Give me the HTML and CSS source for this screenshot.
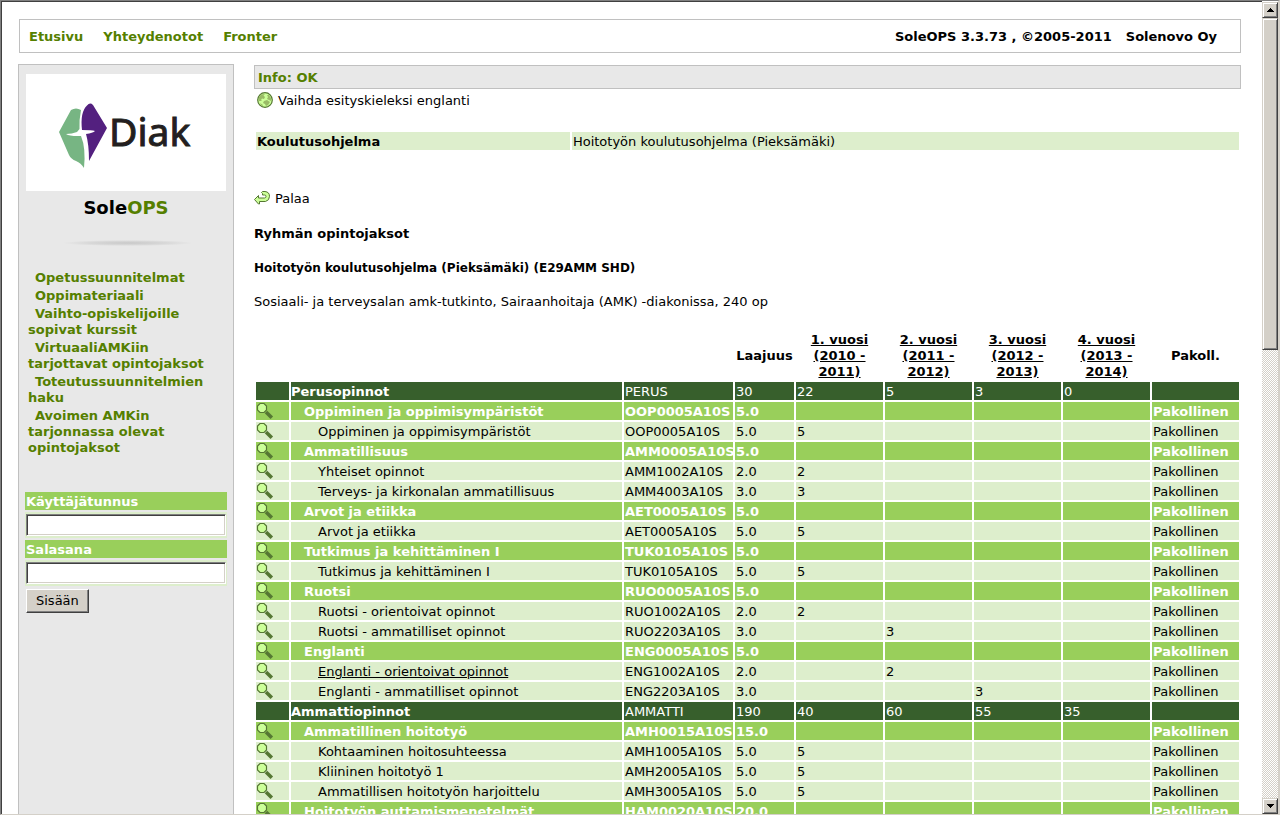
FILE: index.html
```html
<!DOCTYPE html>
<html lang="fi">
<head>
<meta charset="utf-8">
<title>SoleOPS</title>
<link rel="stylesheet" href="styles.css">
</head>
<body>
<svg class="defs" aria-hidden="true">
  <symbol id="lens" viewBox="0 0 18 18">
    <path d="M10 10L15.800 15.800" stroke="#557733" stroke-width="3.600" fill="none"/>
    <path d="M4 1.500H8L10.500 4V8L8 10.500H4L1.500 8V4Z" fill="#ccff99" stroke="#557733" stroke-width="1.200"/>
  </symbol>
</svg>
<div class="frame">
<div class="page">
  <header class="topbar">
    <nav class="topnav"><a href="#">Etusivu</a><a href="#">Yhteydenotot</a><a href="#">Fronter</a></nav>
    <div class="version"><span>SoleOPS 3.3.73 , ©2005-2011</span><span>Solenovo Oy</span></div>
  </header>
  <div class="columns">
    <aside class="sidebar">
      <svg class="logo" viewBox="0 0 200 117" role="img" aria-label="Diak">
        <path fill="#77b583" d="M45 36Q50 33 55 36Q53 46 53.500 55L51 58Q46 60 40 60Q44 62.500 55 62Q60 74 58 94Q55 89 50 87Q45 85 43 81L33 58Z"/>
        <path fill="#53207f" d="M56 56Q54 38 61 31.500Q64 28 67 31L81 54L63 87Q63 70 60 60Q67 59 69 57Q66 56 56 56Z"/>
        <text class="logo-text" x="83" y="72">Diak</text>
      </svg>
      <h1 class="brand">Sole<span>OPS</span></h1>
      <div class="divider"></div>
      <nav class="menu">
        <a href="#">Opetussuunnitelmat</a>
        <a href="#">Oppimateriaali</a>
        <a href="#">Vaihto-opiskelijoille sopivat kurssit</a>
        <a href="#">VirtuaaliAMKiin tarjottavat opintojaksot</a>
        <a href="#">Toteutussuunnitelmien haku</a>
        <a href="#">Avoimen AMKin tarjonnassa olevat opintojaksot</a>
      </nav>
      <form class="login">
        <label for="user">Käyttäjätunnus</label>
        <div class="field"><input id="user" type="text"></div>
        <label for="pass">Salasana</label>
        <div class="field"><input id="pass" type="password"></div>
        <button type="button">Sisään</button>
      </form>
    </aside>
    <main class="main">
      <div class="info">Info: OK</div>
      <a class="language" href="#">
        <svg width="16" height="16" viewBox="0 0 16 16"><circle cx="8" cy="8" r="7.300" fill="#ccff99" stroke="#557733" stroke-width="1.200"/><path fill="#99bb66" d="M2 5L4 2.500L8 2L6.500 3.500L8 5L7 7L5 6.500L4 8L5 9H2L1.500 7ZM10 3H12L14 6V9L12 8L10 7L11 5ZM7 9L10 8L13 10L11 13L9 14L8 12L6 11ZM3 11L6 13V14L4 13Z"/></svg>
        <span>Vaihda esityskieleksi englanti</span>
      </a>
      <table class="program">
        <tr><th scope="row">Koulutusohjelma</th><td>Hoitotyön koulutusohjelma (Pieksämäki)</td></tr>
      </table>
      <a class="back" href="#">
        <svg width="16" height="16" viewBox="0 0 16 16"><path fill="#ccff99" stroke="#557733" stroke-linejoin="round" d="M.5 9.500L4.500 5.500V8H10.500Q12 7.800 12 6.400Q12 5 10.500 5H8.500V3.500L7.500 2.500L8.500 1.500H11Q15.500 2 15.500 6.300Q15.500 10.500 11.500 11.500H5.500V14H4.500Z"/></svg>
        <span>Palaa</span>
      </a>
      <h2 class="line title">Ryhmän opintojaksot</h2>
      <h3 class="line subtitle">Hoitotyön koulutusohjelma (Pieksämäki) (E29AMM SHD)</h3>
      <p class="line">Sosiaali- ja terveysalan amk-tutkinto, Sairaanhoitaja (AMK) -diakonissa, 240 op</p>
      <table class="courses">
        <colgroup><col class="c-icon"><col><col class="c-code"><col class="c-size"><col class="c-year"><col class="c-year"><col class="c-year"><col class="c-year"><col class="c-year"></colgroup>
        <thead>
        <tr><th></th><th></th><th></th><th>Laajuus</th><th><a href="#">1. vuosi (2010 - 2011)</a></th><th><a href="#">2. vuosi (2011 - 2012)</a></th><th><a href="#">3. vuosi (2012 - 2013)</a></th><th><a href="#">4. vuosi (2013 - 2014)</a></th><th>Pakoll.</th></tr>
        </thead>
        <tbody>
        <tr class="group"><td></td><td>Perusopinnot</td><td>PERUS</td><td>30</td><td>22</td><td>5</td><td>3</td><td>0</td><td></td></tr>
        <tr class="module"><td><svg><use href="#lens"/></svg></td><td><a href="#">Oppiminen ja oppimisympäristöt</a></td><td>OOP0005A10S</td><td>5.0</td><td></td><td></td><td></td><td></td><td>Pakollinen</td></tr>
        <tr class="course"><td><svg><use href="#lens"/></svg></td><td><a href="#">Oppiminen ja oppimisympäristöt</a></td><td>OOP0005A10S</td><td>5.0</td><td>5</td><td></td><td></td><td></td><td>Pakollinen</td></tr>
        <tr class="module"><td><svg><use href="#lens"/></svg></td><td><a href="#">Ammatillisuus</a></td><td>AMM0005A10S</td><td>5.0</td><td></td><td></td><td></td><td></td><td>Pakollinen</td></tr>
        <tr class="course"><td><svg><use href="#lens"/></svg></td><td><a href="#">Yhteiset opinnot</a></td><td>AMM1002A10S</td><td>2.0</td><td>2</td><td></td><td></td><td></td><td>Pakollinen</td></tr>
        <tr class="course"><td><svg><use href="#lens"/></svg></td><td><a href="#">Terveys- ja kirkonalan ammatillisuus</a></td><td>AMM4003A10S</td><td>3.0</td><td>3</td><td></td><td></td><td></td><td>Pakollinen</td></tr>
        <tr class="module"><td><svg><use href="#lens"/></svg></td><td><a href="#">Arvot ja etiikka</a></td><td>AET0005A10S</td><td>5.0</td><td></td><td></td><td></td><td></td><td>Pakollinen</td></tr>
        <tr class="course"><td><svg><use href="#lens"/></svg></td><td><a href="#">Arvot ja etiikka</a></td><td>AET0005A10S</td><td>5.0</td><td>5</td><td></td><td></td><td></td><td>Pakollinen</td></tr>
        <tr class="module"><td><svg><use href="#lens"/></svg></td><td><a href="#">Tutkimus ja kehittäminen I</a></td><td>TUK0105A10S</td><td>5.0</td><td></td><td></td><td></td><td></td><td>Pakollinen</td></tr>
        <tr class="course"><td><svg><use href="#lens"/></svg></td><td><a href="#">Tutkimus ja kehittäminen I</a></td><td>TUK0105A10S</td><td>5.0</td><td>5</td><td></td><td></td><td></td><td>Pakollinen</td></tr>
        <tr class="module"><td><svg><use href="#lens"/></svg></td><td><a href="#">Ruotsi</a></td><td>RUO0005A10S</td><td>5.0</td><td></td><td></td><td></td><td></td><td>Pakollinen</td></tr>
        <tr class="course"><td><svg><use href="#lens"/></svg></td><td><a href="#">Ruotsi - orientoivat opinnot</a></td><td>RUO1002A10S</td><td>2.0</td><td>2</td><td></td><td></td><td></td><td>Pakollinen</td></tr>
        <tr class="course"><td><svg><use href="#lens"/></svg></td><td><a href="#">Ruotsi - ammatilliset opinnot</a></td><td>RUO2203A10S</td><td>3.0</td><td></td><td>3</td><td></td><td></td><td>Pakollinen</td></tr>
        <tr class="module"><td><svg><use href="#lens"/></svg></td><td><a href="#">Englanti</a></td><td>ENG0005A10S</td><td>5.0</td><td></td><td></td><td></td><td></td><td>Pakollinen</td></tr>
        <tr class="course"><td><svg><use href="#lens"/></svg></td><td><a class="active" href="#">Englanti - orientoivat opinnot</a></td><td>ENG1002A10S</td><td>2.0</td><td></td><td>2</td><td></td><td></td><td>Pakollinen</td></tr>
        <tr class="course"><td><svg><use href="#lens"/></svg></td><td><a href="#">Englanti - ammatilliset opinnot</a></td><td>ENG2203A10S</td><td>3.0</td><td></td><td></td><td>3</td><td></td><td>Pakollinen</td></tr>
        <tr class="group"><td></td><td>Ammattiopinnot</td><td>AMMATTI</td><td>190</td><td>40</td><td>60</td><td>55</td><td>35</td><td></td></tr>
        <tr class="module"><td><svg><use href="#lens"/></svg></td><td><a href="#">Ammatillinen hoitotyö</a></td><td>AMH0015A10S</td><td>15.0</td><td></td><td></td><td></td><td></td><td>Pakollinen</td></tr>
        <tr class="course"><td><svg><use href="#lens"/></svg></td><td><a href="#">Kohtaaminen hoitosuhteessa</a></td><td>AMH1005A10S</td><td>5.0</td><td>5</td><td></td><td></td><td></td><td>Pakollinen</td></tr>
        <tr class="course"><td><svg><use href="#lens"/></svg></td><td><a href="#">Kliininen hoitotyö 1</a></td><td>AMH2005A10S</td><td>5.0</td><td>5</td><td></td><td></td><td></td><td>Pakollinen</td></tr>
        <tr class="course"><td><svg><use href="#lens"/></svg></td><td><a href="#">Ammatillisen hoitotyön harjoittelu</a></td><td>AMH3005A10S</td><td>5.0</td><td>5</td><td></td><td></td><td></td><td>Pakollinen</td></tr>
        <tr class="module"><td><svg><use href="#lens"/></svg></td><td><a href="#">Hoitotyön auttamismenetelmät</a></td><td>HAM0020A10S</td><td>20.0</td><td></td><td></td><td></td><td></td><td>Pakollinen</td></tr>
        </tbody>
      </table>
    </main>
  </div>
</div>
<div class="scrollbar">
  <button type="button" class="arrow" aria-label="Vieritä ylös"><svg width="7" height="4" viewBox="0 0 7 4" shape-rendering="crispEdges"><path d="M3 0H4V1H5V2H6V3H7V4H0V3H1V2H2V1H3Z"/></svg></button>
  <div class="track"><div class="thumb"></div></div>
  <button type="button" class="arrow" aria-label="Vieritä alas"><svg width="7" height="4" viewBox="0 0 7 4" shape-rendering="crispEdges"><path d="M0 0H7V1H6V2H5V3H4V4H3V3H2V2H1V1H0Z"/></svg></button>
</div>
</div>
</body>
</html>
```

FILE: styles.css
```css
* { box-sizing: border-box; }
body {
  margin: 0;
  font: 13px/16px Verdana, "DejaVu Sans", sans-serif;
  color: #000;
  background: #fff;
}
a { color: inherit; text-decoration: none; }
.defs { position: absolute; width: 0; height: 0; }

.frame {
  display: flex;
  height: 100vh;
  overflow: hidden;
  border: 1px solid;
  border-right-width: 2px;
  border-color: #808080 #d4d0c8 #d4d0c8 #808080;
}
.page {
  flex: 1;
  min-width: 0;
  display: flex;
  flex-direction: column;
  gap: 11px;
  padding: 17px 21px 0 16px;
  overflow: hidden;
  border-top: 1px solid #404040;
  border-left: 1px solid #404040;
}
.topbar {
  flex: none;
  display: flex;
  justify-content: space-between;
  margin-left: 1px;
  padding: 9px 23px 7px 9px;
  border: 1px solid #c0c0c0;
  font-weight: bold;
}
.topnav { display: flex; gap: 20px; color: #557f00; }
.version { display: flex; gap: 14px; }

.columns { flex: 1; min-height: 0; display: flex; gap: 20px; }
.sidebar {
  flex: none;
  width: 216px;
  padding: 9px 6px 0;
  background: #e8e8e8;
  border: 1px solid #c0c0c0;
  border-bottom: 0;
}
.logo { display: block; width: 200px; height: 117px; margin-left: 1px; background: #fff; }
.logo-text { font: 39px "Noto Sans", sans-serif; fill: #231f20; stroke: #231f20; stroke-width: 1px; }
.brand { margin: 5px 0 0; font-size: 18px; line-height: 24px; text-align: center; }
.brand span { color: #557f00; }
.divider {
  height: 6px;
  margin: 20px 34px 0 38px;
  background: radial-gradient(closest-side, #c8c8c8, #d8d8d8 60%, #e8e8e8);
}
.menu {
  display: flex;
  flex-direction: column;
  gap: 2px;
  margin: 24px 12px 0 3px;
  font-weight: bold;
  color: #557f00;
}
.menu a { text-indent: 7px; }
.login { display: flex; flex-direction: column; gap: 2px; margin-top: 36px; }
.login label { padding: 2px 1px 0; background: #99cf5b; color: #fff; font-weight: bold; }
.field { padding: 2px 1px; background: #ddeecc; }
.field input {
  display: block;
  width: 100%;
  height: 22px;
  padding: 2px;
  background: #fff;
  border: 1px solid;
  border-color: #808080 #fff #fff #808080;
  box-shadow: inset 1px 1px #404040, inset -1px -1px #d4d0c8;
  font: inherit;
}
.login button {
  align-self: flex-start;
  margin: 1px;
  height: 24px;
  padding: 0 9px;
  background: #d4d0c8;
  border: 1px solid;
  border-color: #fff #404040 #404040 #fff;
  box-shadow: inset -1px -1px #808080;
  font: inherit;
}

.main { flex: 1; min-width: 0; padding-top: 1px; }
.info {
  padding: 4px 3px 2px;
  border: 1px solid #c0c0c0;
  background: #e8e8e8;
  color: #557f00;
  font-weight: bold;
}
.language { display: flex; gap: 5px; margin: 3px 0 0 3px; }
.language span, .back span { padding-top: 1px; }
.program { width: 100%; margin-top: 21px; border-spacing: 2px; table-layout: fixed; }
.program th, .program td { padding: 2px 1px 0; background: #ddeecc; text-align: left; }
.program th { width: 32%; }
.back { display: flex; gap: 5px; margin-top: 38px; }
.line { margin: 18px 0 0; font-size: 13px; line-height: 16px; }
.title { margin-top: 19px; }
.subtitle { font-size: 12px; }

.courses { width: 100%; margin-top: 18px; border-spacing: 2px; table-layout: fixed; }
.c-icon { width: 33px; }
.c-code { width: 109px; }
.c-size { width: 59px; }
.c-year { width: 87px; }
.courses th, .courses td { padding: 2px 1px 0; white-space: nowrap; }
.courses th { white-space: normal; }
.courses th a { display: inline-block; width: 66px; text-decoration: underline; }
.courses td { height: 18px; }
.courses td:first-child { padding: 0; }
.courses td svg { display: block; width: 18px; height: 18px; }
.group { color: #fff; }
.group td { background: #375f2c; }
.group td:nth-child(2) { padding-left: 0; font-weight: bold; }
.module { color: #fff; font-weight: bold; }
.module td { background: #99cf5b; }
.module td:nth-child(2) { padding-left: 13px; }
.course td { background: #ddeecc; }
.course td:nth-child(2) { padding-left: 27px; }
.active { text-decoration: underline; }

.scrollbar { flex: none; width: 16px; display: flex; flex-direction: column; padding-top: 1px; }
.arrow, .thumb {
  background: #d4d0c8;
  border: 1px solid;
  border-color: #d4d0c8 #404040 #404040 #d4d0c8;
  box-shadow: inset 1px 1px #fff, inset -1px -1px #808080;
}
.arrow { flex: none; height: 16px; padding: 0; display: flex; align-items: center; justify-content: center; }
.track { flex: 1; background: repeating-conic-gradient(#d4d0c8 0 25%, #fff 0 50%) 0 0 / 2px 2px; }
.thumb { height: 42.500%; }
```
